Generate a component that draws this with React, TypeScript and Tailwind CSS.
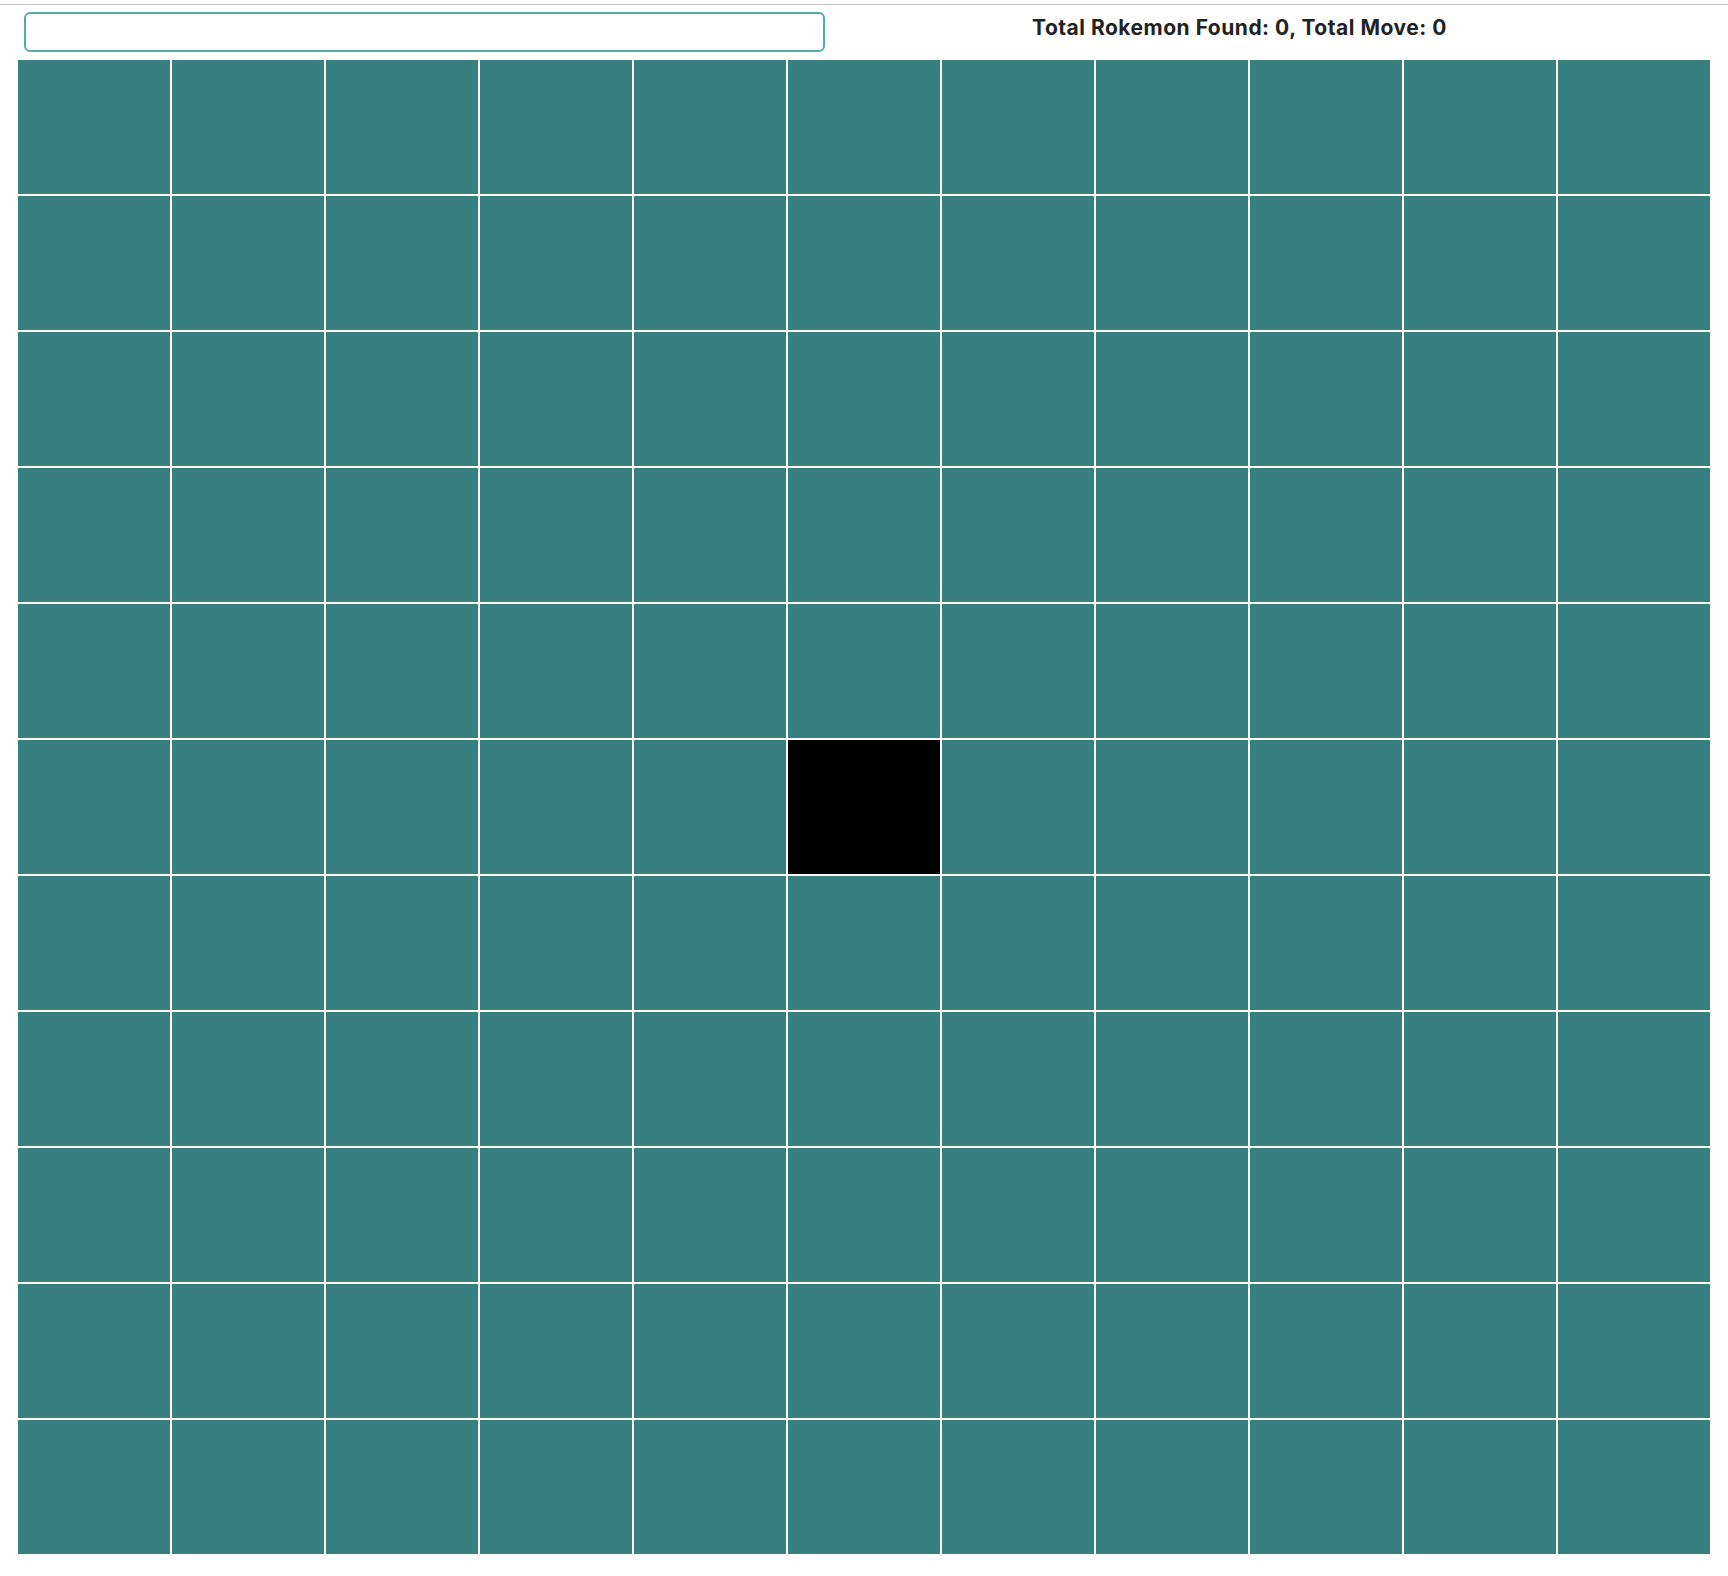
import { useState } from "react"

const SIZE = 11
const PLAYER = { row: 5, col: 5 }

const Cell = ({ active }: { active: boolean }) => {
    return (
        <div className={active ? "h-[134px] bg-black" : "h-[134px] bg-[#387f80]"} />
    )
}

const App = () => {
    const [query, setQuery] = useState("")
    const found = 0
    const moves = 0

    return (
        <div className="min-h-screen bg-white font-['Inter','Liberation_Sans',sans-serif]">
            <div className="pt-[4px]">
                <div className="border-t border-[#c4c4c4]" />
                <div className="flex items-start h-[55px]">
                    <input
                        value={query}
                        onChange={(e) => setQuery(e.target.value)}
                        className="ml-[24px] mt-[7px] w-[801px] h-[40px] rounded-[6px] border-2 border-[#4fafa5] outline-none px-2"
                    />
                    <h3 className="ml-[207px] mt-[10px] text-[21px] leading-[25px] tracking-[0.5px] font-bold text-[#222]">
                        Total Rokemon Found: {found}, Total Move: {moves}
                    </h3>
                </div>
                <div className="ml-[18px] w-[1692px] grid grid-cols-11 gap-[2px]">
                    {Array.from({ length: SIZE * SIZE }).map((_, i) => (
                        <Cell
                            key={i}
                            active={Math.floor(i / SIZE) === PLAYER.row && i % SIZE === PLAYER.col}
                        />
                    ))}
                </div>
            </div>
        </div>
    )
}

export default App
